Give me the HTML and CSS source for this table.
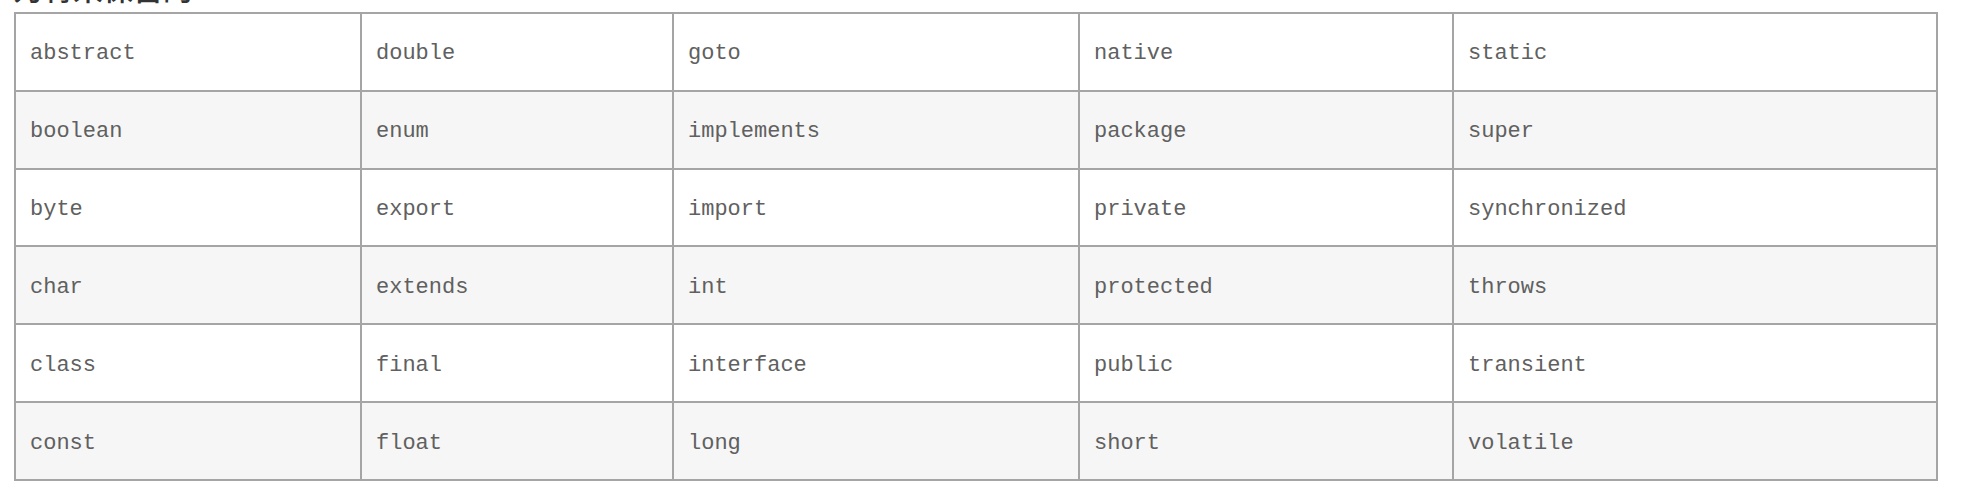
FILE: index.html
```html
<!DOCTYPE html>
<html lang="zh-CN">
<head>
<meta charset="utf-8">
<title>Java 关键字</title>
<link rel="stylesheet" href="styles.css">
</head>
<body>
<p class="caption">为将来保留的</p>
<table class="kw-table">
  <colgroup>
    <col class="c1"><col class="c2"><col class="c3"><col class="c4"><col class="c5">
  </colgroup>
  <tbody>
    <tr><td>abstract</td><td>double</td><td>goto</td><td>native</td><td>static</td></tr>
    <tr class="alt"><td>boolean</td><td>enum</td><td>implements</td><td>package</td><td>super</td></tr>
    <tr><td>byte</td><td>export</td><td>import</td><td>private</td><td>synchronized</td></tr>
    <tr class="alt"><td>char</td><td>extends</td><td>int</td><td>protected</td><td>throws</td></tr>
    <tr><td>class</td><td>final</td><td>interface</td><td>public</td><td>transient</td></tr>
    <tr class="alt"><td>const</td><td>float</td><td>long</td><td>short</td><td>volatile</td></tr>
  </tbody>
</table>
</body>
</html>
```

FILE: styles.css
```css
html, body {
  margin: 0;
  padding: 0;
  background: #ffffff;
}

.caption {
  margin: -28px 0 10px 13px;
  font-family: "Noto Sans CJK SC", sans-serif;
  font-weight: 500;
  font-size: 30px;
  line-height: 30px;
  color: #333333;
}

.kw-table {
  margin-left: 14px;
  width: 1924px;
  table-layout: fixed;
  border-collapse: separate;
  border-spacing: 0;
  border-top: 2px solid #a5a5a5;
  border-left: 2px solid #a5a5a5;
}

.c1 { width: 346px; }
.c2 { width: 312px; }
.c3 { width: 406px; }
.c4 { width: 374px; }
.c5 { width: 484px; }

.kw-table td {
  box-sizing: border-box;
  height: 77.83px;
  padding: 4px 14px 0 14px;
  border-right: 2px solid #a5a5a5;
  border-bottom: 2px solid #a5a5a5;
  font-family: "Liberation Mono", monospace;
  font-size: 22px;
  color: #606060;
  vertical-align: middle;
  background: #ffffff;
}

.kw-table tr.alt td {
  background: #f6f6f6;
}
```
